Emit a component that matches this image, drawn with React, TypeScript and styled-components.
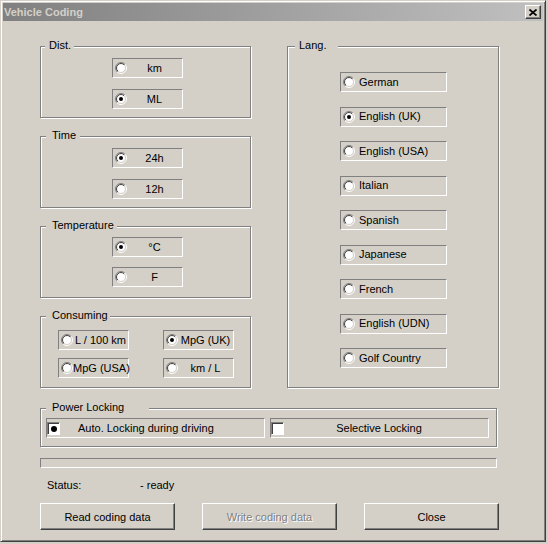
import React, { useId } from 'react';
import styled, { createGlobalStyle } from 'styled-components';

const GlobalStyle = createGlobalStyle`
  html, body {
    margin: 0;
    padding: 0;
    background: #d4d0c8;
  }
  body {
    font-family: "Liberation Sans", Arial, sans-serif;
    font-size: 11px;
    color: #000;
  }
`;

// window chrome
const Window = styled.div`
  box-sizing: border-box;
  width: 546px;
  height: 542px;
  border: 1px solid;
  border-color: #d4d0c8 #404040 #404040 #d4d0c8;
  box-shadow: inset 1px 1px 0 #fff, inset -1px -1px 0 #808080;
  padding: 2px;
  display: flex;
  flex-direction: column;
  background: #d4d0c8;
`;

const TitleBar = styled.div`
  height: 18px;
  display: flex;
  align-items: center;
  justify-content: space-between;
  padding: 0 2px 0 1px;
  background: linear-gradient(90deg, #808080 0%, #c0c0c0 100%);
`;

const TitleText = styled.span`
  font-weight: bold;
  font-size: 11px;
  color: #d4d0c8;
  line-height: 13px;
`;

const CloseButton = styled.span`
  box-sizing: border-box;
  width: 16px;
  height: 14px;
  display: flex;
  align-items: center;
  justify-content: center;
  background: #d4d0c8;
  border: 1px solid;
  border-color: #fff #404040 #404040 #fff;
  box-shadow: inset -1px -1px 0 #808080;
`;

const Body = styled.div`
  padding: 25px 0 0 37px;
  display: flex;
  flex-direction: column;
`;

const Columns = styled.div`
  display: grid;
  grid-template-columns: 211px 212px;
  column-gap: 36px;
`;

const LeftColumn = styled.div`
  display: flex;
  flex-direction: column;
  gap: 18px;
`;

// etched group frame
const Frame = styled.div<{ $h?: number; $w?: number; $pt: number; $pl: number; $gap: number }>`
  position: relative;
  box-sizing: border-box;
  ${(p) => (p.$h ? `height: ${p.$h}px;` : '')}
  ${(p) => (p.$w ? `width: ${p.$w}px;` : '')}
  border: 1px solid #808080;
  box-shadow: inset 1px 1px 0 #fff, 1px 1px 0 #fff;
  padding: ${(p) => p.$pt}px 0 0 ${(p) => p.$pl}px;
  display: flex;
  flex-direction: column;
  gap: ${(p) => p.$gap}px;
`;

const Legend = styled.span<{ $left: number; $pl: number; $pr: number }>`
  position: absolute;
  top: -8px;
  left: ${(p) => p.$left}px;
  padding: 0 ${(p) => p.$pr}px 0 ${(p) => p.$pl}px;
  line-height: 13px;
  background: #d4d0c8;
  white-space: nowrap;
`;

const OptionGrid = styled.div`
  display: grid;
  grid-template-columns: 71px 71px;
  column-gap: 34px;
  row-gap: 8px;
`;

const HRow = styled.div`
  display: flex;
  gap: 5px;
`;

// sunken option cell
const OptionBox = styled.div<{ $w: number }>`
  box-sizing: border-box;
  width: ${(p) => p.$w}px;
  height: 20px;
  display: flex;
  align-items: center;
  padding-left: 2px;
  border: 1px solid;
  border-color: #808080 #fff #fff #808080;
`;

const CheckCell = styled(OptionBox)`
  padding-left: 0;
`;

const OptionLabel = styled.span<{ $align: 'left' | 'center'; $pr?: number }>`
  flex: 1;
  line-height: 13px;
  white-space: nowrap;
  text-align: ${(p) => p.$align};
  padding-left: ${(p) => (p.$align === 'left' ? 4 : 0)}px;
  padding-right: ${(p) => p.$pr ?? 0}px;
`;

const CheckSquare = styled.span`
  box-sizing: border-box;
  width: 13px;
  height: 13px;
  flex: none;
  display: flex;
  align-items: center;
  justify-content: center;
  background: #fff;
  border: 1px solid;
  border-color: #808080 #fff #fff #808080;
  box-shadow: inset 1px 1px 0 #404040;
`;

const Dot = styled.span`
  width: 6px;
  height: 6px;
  border-radius: 50%;
  background: #000;
  margin: 1px 0 0 1px;
`;

const AutoLabel = styled.span`
  padding-left: 18px;
  line-height: 13px;
  white-space: nowrap;
`;

const Progress = styled.div`
  box-sizing: border-box;
  width: 457px;
  height: 10px;
  margin-top: 11px;
  border: 1px solid;
  border-color: #808080 #fff #fff #808080;
`;

const StatusRow = styled.div`
  margin-top: 11px;
  height: 13px;
  line-height: 13px;
  display: flex;
  padding-left: 7px;
`;

const StatusLabel = styled.span`
  width: 93px;
`;

const ButtonRow = styled.div`
  margin-top: 11px;
  width: 459px;
  display: flex;
  justify-content: space-between;
`;

const Button = styled.button`
  box-sizing: border-box;
  width: 135px;
  height: 27px;
  padding: 0;
  font-family: inherit;
  font-size: 11px;
  color: #000;
  background: #d4d0c8;
  border: 1px solid;
  border-color: #fff #404040 #404040 #fff;
  box-shadow: inset -1px -1px 0 #808080;

  &:disabled {
    color: #808080;
    text-shadow: 1px 1px 0 #fff;
  }
`;

function RadioGlyph({ checked }: { checked?: boolean }) {
  const id = useId().replace(/[^a-zA-Z0-9]/g, '');
  return (
    <svg width="12" height="12" viewBox="0 0 12 12" style={{ flex: 'none' }}>
      <defs>
        <linearGradient id={`${id}o`} x1="0" y1="0" x2="1" y2="1">
          <stop offset="0.5" stopColor="#808080" />
          <stop offset="0.5" stopColor="#ffffff" />
        </linearGradient>
        <linearGradient id={`${id}i`} x1="0" y1="0" x2="1" y2="1">
          <stop offset="0.5" stopColor="#404040" />
          <stop offset="0.5" stopColor="#d4d0c8" />
        </linearGradient>
      </defs>
      <circle cx="6" cy="6" r="5.5" fill="none" stroke={`url(#${id}o)`} />
      <circle cx="6" cy="6" r="4.5" fill="#fff" stroke={`url(#${id}i)`} />
      {checked && <circle cx="6" cy="6" r="2" fill="#000" />}
    </svg>
  );
}

const Option = ({
  label,
  checked,
  width = 71,
  align = 'center',
}: {
  label: string;
  checked?: boolean;
  width?: number;
  align?: 'left' | 'center';
}) => (
  <OptionBox $w={width}>
    <RadioGlyph checked={checked} />
    <OptionLabel $align={align}>{label}</OptionLabel>
  </OptionBox>
);

const languages = [
  { label: 'German' },
  { label: 'English (UK)', checked: true },
  { label: 'English (USA)' },
  { label: 'Italian' },
  { label: 'Spanish' },
  { label: 'Japanese' },
  { label: 'French' },
  { label: 'English (UDN)' },
  { label: 'Golf Country' },
];

export default function App() {
  return (
    <>
      <GlobalStyle />
      <Window>
        <TitleBar>
          <TitleText>Vehicle Coding</TitleText>
          <CloseButton>
            <svg width="8" height="7" viewBox="0 0 8 7">
              <path d="M0.5 0.5 L7.5 6.5 M7.5 0.5 L0.5 6.5" stroke="#000" strokeWidth="1.7" />
            </svg>
          </CloseButton>
        </TitleBar>

        <Body>
          <Columns>
            <LeftColumn>
              <Frame $h={72} $pt={11} $pl={71} $gap={11}>
                <Legend $left={4} $pl={4} $pr={3}>Dist.</Legend>
                <Option label="km" />
                <Option label="ML" checked />
              </Frame>
              <Frame $h={72} $pt={11} $pl={71} $gap={11}>
                <Legend $left={5} $pl={6} $pr={4}>Time</Legend>
                <Option label="24h" checked />
                <Option label="12h" />
              </Frame>
              <Frame $h={72} $pt={10} $pl={71} $gap={10}>
                <Legend $left={5} $pl={6} $pr={3}>Temperature</Legend>
                <Option label="°C" checked />
                <Option label="F" />
              </Frame>
              <Frame $h={72} $pt={13} $pl={17} $gap={0}>
                <Legend $left={5} $pl={6} $pr={2}>Consuming</Legend>
                <OptionGrid>
                  <Option label="L / 100 km" />
                  <Option label="MpG (UK)" checked />
                  <Option label="MpG (USA)" />
                  <Option label="km / L" />
                </OptionGrid>
              </Frame>
            </LeftColumn>

            <Frame $pt={25} $pl={52} $gap={14.5}>
              <Legend $left={7} $pl={4} $pr={11}>Lang.</Legend>
              {languages.map((l) => (
                <Option key={l.label} label={l.label} checked={l.checked} width={107} align="left" />
              ))}
            </Frame>
          </Columns>

          <Frame $h={39} $w={457} $pt={9} $pl={5} $gap={0} style={{ marginTop: 20 }}>
            <Legend $left={5} $pl={6} $pr={25}>Power Locking</Legend>
            <HRow>
              <CheckCell $w={219}>
                <CheckSquare>
                  <Dot />
                </CheckSquare>
                <AutoLabel>Auto. Locking during driving</AutoLabel>
              </CheckCell>
              <CheckCell $w={219}>
                <CheckSquare />
                <OptionLabel $align="center" $pr={14}>Selective Locking</OptionLabel>
              </CheckCell>
            </HRow>
          </Frame>

          <Progress />

          <StatusRow>
            <StatusLabel>Status:</StatusLabel>
            <span>- ready</span>
          </StatusRow>

          <ButtonRow>
            <Button>Read coding data</Button>
            <Button disabled>Write coding data</Button>
            <Button>Close</Button>
          </ButtonRow>
        </Body>
      </Window>
    </>
  );
}
